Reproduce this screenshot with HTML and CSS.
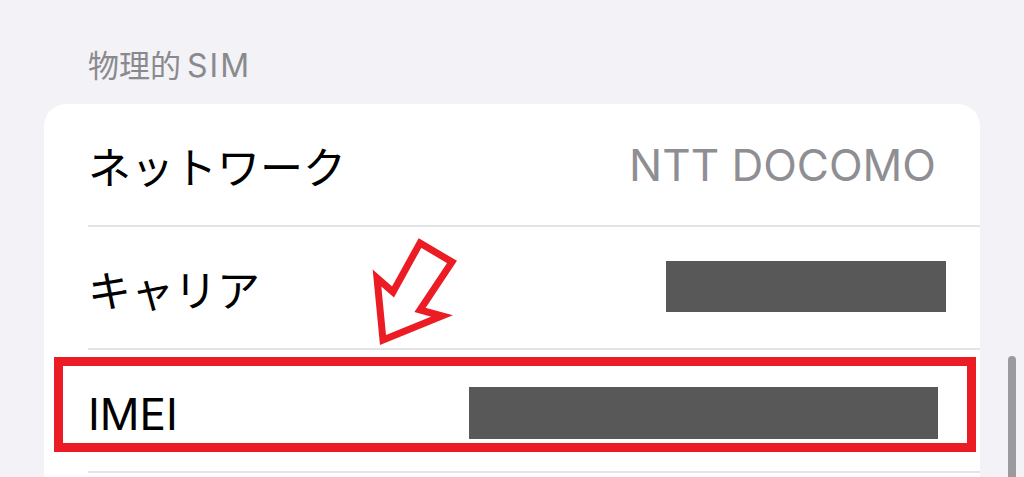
FILE: index.html
```html
<html>
<head>
  <meta charset="UTF-8">
  <title>物理的SIM</title>
  <link rel="stylesheet" href="styles.css">
</head>
<body>
  <div class="page">
    <div class="section-title">物理的<span class="latin">SIM</span></div>
    <div class="card">
      <div class="row">
        <div class="row-inner">
          <span class="label">ネットワーク</span>
          <span class="value">NTT DOCOMO</span>
        </div>
      </div>
      <div class="row">
        <div class="row-inner">
          <span class="label">キャリア</span>
          <span class="redact redact-carrier"></span>
        </div>
      </div>
      <div class="row row-imei">
        <div class="row-inner">
          <span class="label">IMEI</span>
          <span class="redact redact-imei"></span>
        </div>
        <div class="highlight"></div>
      </div>
      <div class="row">
        <div class="row-inner row-cut"></div>
      </div>
      <svg class="arrow" width="90" height="112" viewBox="0 0 90 112">
        <polygon points="49,5 81,24 49,72 71,78 12,102 6,40 22,54" fill="#fff" stroke="#ec1c24" stroke-width="7" stroke-linejoin="miter"/>
      </svg>
    </div>
  </div>
  <div class="scrollbar"></div>
</body>
</html>
```
FILE: styles.css
```css
body {
  margin: 0;
  padding: 0;
  background: #f2f2f7;
  font-family: Inter, "Noto Sans CJK JP", sans-serif;
  overflow: hidden;
  height: 477px;
}
.page {
  padding: 44px 44px 0 44px;
}
.section-title {
  padding-left: 44px;
  font-size: 31px;
  line-height: 44px;
  color: #8a8a8e;
  margin-bottom: 16px;
}
.section-title .latin {
  margin-left: 6px;
  font-size: 32px;
  letter-spacing: 2px;
}
.card {
  position: relative;
  width: 936px;
  height: 373px;
  overflow: hidden;
  background: #fff;
  border-radius: 22px 22px 0 0;
}
.row {
  position: relative;
  padding-left: 44px;
}
.row-inner {
  box-sizing: border-box;
  height: 123px;
  padding-right: 44px;
  border-bottom: 2px solid #e4e4e8;
  display: flex;
  align-items: center;
  justify-content: space-between;
}
.row-cut {
  height: 4px;
  border-bottom: none;
}
.label {
  font-size: 43px;
  color: #000;
}
.value {
  font-size: 44px;
  color: #8e8e93;
}
.redact {
  display: block;
  background: #585858;
  height: 51px;
}
.redact-carrier {
  width: 280px;
  margin-right: -10px;
  margin-top: -2px;
}
.redact-imei {
  width: 469px;
  margin-right: -2px;
  height: 52px;
  margin-top: 5px;
}
.row-imei .label {
  font-size: 44px;
  margin-top: 6px;
}
.highlight {
  position: absolute;
  left: 10px;
  top: 7px;
  width: 922px;
  height: 95px;
  box-sizing: border-box;
  border: 9px solid #ec1c24;
}
.arrow {
  position: absolute;
  left: 327px;
  top: 134px;
}
.scrollbar {
  position: absolute;
  left: 1008px;
  top: 356px;
  width: 8px;
  height: 121px;
  border-radius: 4px 4px 0 0;
  background: #9b9b9e;
}
```
